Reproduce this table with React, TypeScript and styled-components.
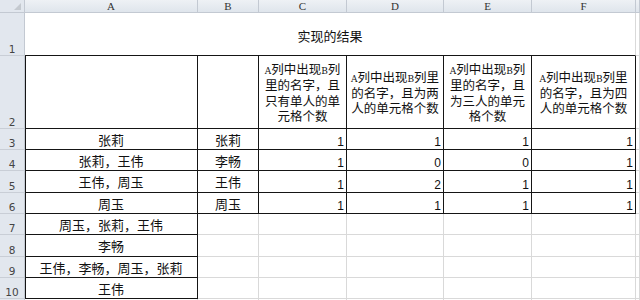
import { Fragment } from "react";
import styled, { createGlobalStyle } from "styled-components";

const GlobalStyle = createGlobalStyle`
  body {
    margin: 0;
    background: #ffffff;
  }
`;

const Sheet = styled.div`
  display: grid;
  grid-template-columns: 25px 173px 61px 88px 97px 88px 104px 4px;
  grid-template-rows: 13px 43px 73px 21px 21px 22px 21px 21px 22px 21px 21px 20px;
  width: 640px;
  height: 300px;
  overflow: hidden;
  background: #ffffff;
  font-family: "Noto Sans CJK SC", "Noto Sans", sans-serif;
  color: #111;
`;

const Corner = styled.div`
  background: #e2e7ee;
  border-right: 1px solid #c3c9d2;
  border-bottom: 1px solid #c3c9d2;
  position: relative;

  &::after {
    content: "";
    position: absolute;
    right: 3px;
    bottom: 2px;
    border-left: 7px solid transparent;
    border-bottom: 7px solid #c4c9cf;
  }
`;

const ColHead = styled.div`
  display: flex;
  align-items: center;
  justify-content: center;
  background: linear-gradient(#eef1f5, #dfe5ec);
  border-right: 1px solid #c3c9d2;
  border-bottom: 1px solid #c3c9d2;
  font-family: "Liberation Serif", serif;
  font-size: 11px;
  color: #333;
  line-height: 1;
`;

const RowHead = styled.div`
  display: flex;
  align-items: flex-end;
  justify-content: center;
  padding-bottom: 1px;
  background: #e2e7ee;
  border-right: 1px solid #c3c9d2;
  border-bottom: 1px solid #c9ced6;
  font-family: "DejaVu Sans", sans-serif;
  font-size: 10.5px;
  color: #444;
  line-height: 1;
`;

type Edge = "dark" | "light";

const edgeColor = (e: Edge) => (e === "dark" ? "#151515" : "#d9d9d9");

const Cell = styled.div<{
  $right?: Edge;
  $bottom?: Edge;
  $left?: boolean;
  $span?: number;
}>`
  grid-column: span ${(p) => p.$span ?? 1};
  display: flex;
  min-width: 0;
  border-right: 1px solid ${(p) => edgeColor(p.$right ?? "light")};
  border-bottom: 1px solid ${(p) => edgeColor(p.$bottom ?? "light")};
  box-shadow: ${(p) => (p.$left ? "inset 1px 0 0 #151515" : "none")};
`;

const Title = styled(Cell)`
  align-items: center;
  justify-content: center;
  font-size: 13px;
  padding-top: 2px;
`;

const HeadText = styled(Cell)`
  flex-direction: column;
  align-items: center;
  justify-content: center;
  font-size: 12.5px;
  text-align: center;
  padding-top: 1px;
`;

const Line = styled.span`
  display: block;
  height: 15.7px;
  line-height: 15.7px;
  white-space: nowrap;
`;

const Latin = styled.span`
  font-family: "DejaVu Serif", serif;
  font-size: 9px;
`;

const NameCell = styled(Cell)`
  align-items: center;
  justify-content: center;
  font-size: 13px;
  white-space: nowrap;
`;

const NumCell = styled(Cell)`
  align-items: flex-end;
  justify-content: flex-end;
  padding: 0 2px 1px 0;
  font-family: "Liberation Sans", Arial, sans-serif;
  font-size: 12px;
  line-height: 1;
`;

const heads: string[][] = [
  ["A列中出现B列", "里的名字，且", "只有单人的单", "元格个数"],
  ["A列中出现B列里", "的名字，且为两", "人的单元格个数"],
  ["A列中出现B列", "里的名字，且", "为三人的单元", "格个数"],
  ["A列中出现B列里", "的名字，且为四", "人的单元格个数"],
];

const data: { a: string; b: string; n: number[] }[] = [
  { a: "张莉", b: "张莉", n: [1, 1, 1, 1] },
  { a: "张莉，王伟", b: "李畅", n: [1, 0, 0, 1] },
  { a: "王伟，周玉", b: "王伟", n: [1, 2, 1, 1] },
  { a: "周玉", b: "周玉", n: [1, 1, 1, 1] },
];

const extra = ["周玉，张莉，王伟", "李畅", "王伟，李畅，周玉，张莉", "王伟"];

const renderLine = (text: string) =>
  text.split(/([AB])/).map((part, i) =>
    part === "A" || part === "B" ? <Latin key={i}>{part}</Latin> : part
  );

export default function App() {
  return (
    <>
      <GlobalStyle />
      <Sheet>
        <Corner />
        {["A", "B", "C", "D", "E", "F", ""].map((c, i) => (
          <ColHead key={i}>{c}</ColHead>
        ))}

        <RowHead>1</RowHead>
        <Title $span={6} $bottom="dark">
          实现的结果
        </Title>
        <Cell />

        <RowHead>2</RowHead>
        <Cell $left $right="dark" $bottom="dark" />
        <Cell $right="dark" $bottom="dark" />
        {heads.map((lines, i) => (
          <HeadText key={i} $right="dark" $bottom="dark">
            {lines.map((l, j) => (
              <Line key={j}>{renderLine(l)}</Line>
            ))}
          </HeadText>
        ))}
        <Cell />

        {data.map((row, r) => (
          <Fragment key={r}>
            <RowHead>{r + 3}</RowHead>
            <NameCell $left $right="dark" $bottom="dark">
              {row.a}
            </NameCell>
            <NameCell $right="dark" $bottom="dark">
              {row.b}
            </NameCell>
            {row.n.map((v, i) => (
              <NumCell key={i} $right="dark" $bottom="dark">
                {v}
              </NumCell>
            ))}
            <Cell />
          </Fragment>
        ))}

        {extra.map((name, r) => (
          <Fragment key={name + r}>
            <RowHead>{r + 7}</RowHead>
            <NameCell $left $right="dark" $bottom="dark">
              {name}
            </NameCell>
            {[0, 1, 2, 3, 4, 5].map((i) => (
              <Cell key={i} />
            ))}
          </Fragment>
        ))}

        <RowHead />
        {[0, 1, 2, 3, 4, 5, 6].map((i) => (
          <Cell key={i} />
        ))}
      </Sheet>
    </>
  );
}
